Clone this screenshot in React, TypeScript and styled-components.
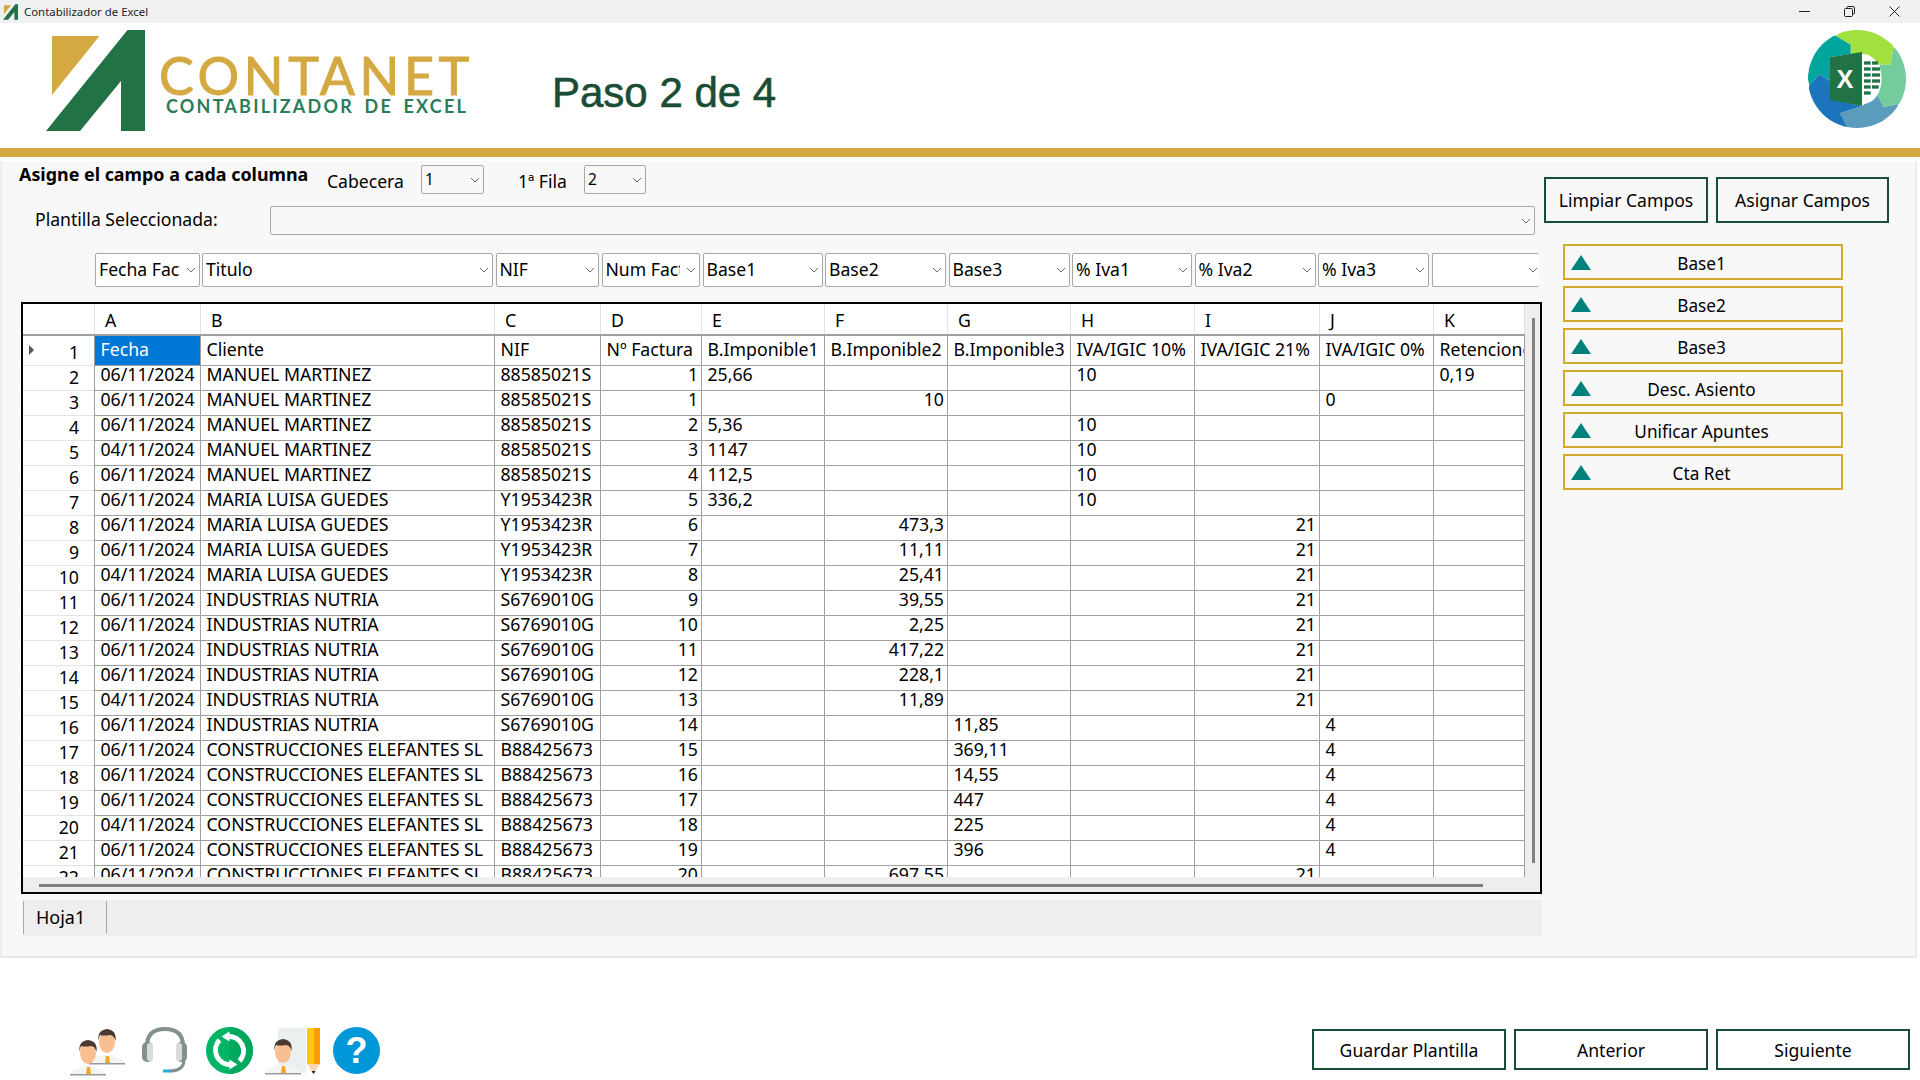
import React from 'react';
import styled, { createGlobalStyle } from 'styled-components';

const GlobalStyle = createGlobalStyle`
  html, body {
    margin: 0;
    padding: 0;
    width: 1920px;
    height: 1080px;
    overflow: hidden;
    background: #ffffff;
    font-family: "Noto Sans", "Liberation Sans", sans-serif;
    color: #000000;
  }
  * { box-sizing: border-box; }
`;

const COLUMN_WIDTHS = [72, 106, 294, 106, 101, 123, 123, 123, 124, 125, 114, 91];
const gridTemplate = COLUMN_WIDTHS.map((w) => `${w}px`).join(' ');

const TitleBar = styled.div`
  height: 23px;
  background: #f0f1f3;
  display: flex;
  align-items: center;
  padding: 0 20px 0 3px;
`;
const TitleText = styled.span`
  margin-left: 6px;
  font-size: 11.4px;
  color: #222222;
  flex: 1;
`;
const WindowControls = styled.div`
  display: flex;
  align-items: center;
  gap: 34px;
`;

const Header = styled.header`
  height: 125px;
  display: flex;
  align-items: flex-start;
  padding: 7px 14px 0 46px;
`;
const BrandText = styled.div`
  margin: 27px 0 0 14px;
  width: 320px;
`;
const BrandName = styled.div`
  font-family: "Lato", sans-serif;
  font-size: 52px;
  line-height: 37px;
  letter-spacing: 4.6px;
  -webkit-text-stroke: 1px #d4a942;
  color: #d4a942;
  white-space: nowrap;
`;
const BrandSub = styled.div`
  font-family: "Lato", sans-serif;
  font-size: 18px;
  line-height: 14px;
  margin: 5px 0 0 7px;
  letter-spacing: 2.2px;
  word-spacing: 4px;
  font-weight: 700;
  color: #2b7d58;
  white-space: nowrap;
`;
const StepTitle = styled.h1`
  margin: 39px 0 0 73px;
  font-family: "Liberation Sans", sans-serif;
  font-weight: 400;
  font-size: 42px;
  line-height: 47px;
  color: #1a4d36;
  -webkit-text-stroke: 0.6px #1a4d36;
  flex: 1;
`;
const GoldBar = styled.div`
  height: 9px;
  background: #d4a942;
  margin-bottom: 4px;
`;

const Panel = styled.main`
  width: 1917px;
  height: 797px;
  background: #f8f8f8;
  border-left: 2px solid #ededed;
  border-right: 2px solid #ededed;
  border-bottom: 2px solid #e8e8e8;
  display: flex;
  align-items: flex-start;
`;
const MainColumn = styled.div`
  width: 1540px;
  flex: none;
`;
const SideColumn = styled.div`
  padding: 16px 0 0 2px;
`;

const TopRow = styled.div`
  display: flex;
  align-items: flex-start;
  height: 45px;
  padding-left: 17px;
`;
const Heading = styled.div`
  font-weight: 700;
  font-size: 17.9px;
  line-height: 24px;
  margin-top: 1px;
  width: 308px;
  white-space: nowrap;
`;
const FieldLabel = styled.span`
  font-size: 17.6px;
  line-height: 24px;
  margin-top: 8px;
  white-space: nowrap;
`;
const SelectBox = styled.div<{ $w: number; $h?: number; $open?: boolean }>`
  width: ${(p) => p.$w}px;
  height: ${(p) => p.$h ?? 34}px;
  flex: none;
  background: ${(p) => (p.$h ? '#f8f8f8' : '#ffffff')};
  border: 1px solid #a8a8a8;
  border-right-width: ${(p) => (p.$open ? 0 : 1)}px;
  border-radius: 2px;
  display: flex;
  align-items: center;
  padding: 0 ${(p) => (p.$open ? 0 : 2)}px 2px 3px;
  font-size: ${(p) => (p.$h ? 15.5 : 17.6)}px;
  overflow: hidden;
`;
const SelectText = styled.span`
  flex: 1;
  min-width: 0;
  margin-right: 6px;
  overflow: hidden;
  white-space: nowrap;
`;
const ChevronIcon = styled.svg`
  flex: none;
  margin: 2px 1px 0 0;
`;
const SmallSelectWrap = styled.div<{ $ml: number; $mr?: number }>`
  margin: 4px ${(p) => p.$mr ?? 0}px 0 ${(p) => p.$ml}px;
`;
const TemplateRow = styled.div`
  display: flex;
  align-items: flex-start;
  height: 29px;
  padding-left: 33px;
  gap: 48px;
`;
const TemplateLabel = styled.span`
  font-size: 17.6px;
  line-height: 27px;
  white-space: nowrap;
  width: 187px;
`;
const FieldsRow = styled.div`
  display: flex;
  gap: 2.5px;
  margin-top: 18px;
  margin-left: 93px;
`;

const TableFrame = styled.div`
  margin: 15px 0 0 19px;
  width: 1521px;
  height: 592px;
  border: 2px solid #000000;
  background: #eeeeee;
  display: grid;
  grid-template-columns: 1fr 15px;
  grid-template-rows: 1fr 15px;
  overflow: hidden;
`;
const TableViewport = styled.div`
  background: #ffffff;
  overflow: hidden;
  font-size: 17.7px;
  line-height: 25px;
`;
const HeaderRow = styled.div`
  display: grid;
  grid-template-columns: ${gridTemplate};
  height: 32px;
  border-bottom: 2px solid #a0a0a0;
`;
const HeaderCell = styled.div`
  padding: 4px 0 0 10px;
  border-right: 1px solid #e2e2e2;
  white-space: nowrap;
`;
const DataRow = styled.div`
  display: grid;
  grid-template-columns: ${gridTemplate};
  height: 25px;
`;
const RowHeader = styled.div`
  display: flex;
  align-items: center;
  border-bottom: 1px solid #e4e4e4;
  border-right: 1px solid #a0a0a0;
  padding: 0 15px 0 6px;
`;
const RowArrow = styled.span<{ $show: boolean }>`
  width: 0;
  height: 0;
  border-top: 5px solid transparent;
  border-bottom: 5px solid transparent;
  border-left: ${(p) => (p.$show ? '5px solid #555555' : '0')};
  margin-top: -2px;
`;
const RowNumber = styled.span`
  margin-left: auto;
  padding-top: 4px;
`;
const Cell = styled.div<{ $right?: boolean; $selected?: boolean }>`
  padding: 0.5px 3px 0 5.5px;
  text-align: ${(p) => (p.$right ? 'right' : 'left')};
  border-bottom: 1px solid #a0a0a0;
  border-right: 1px solid #a0a0a0;
  background: ${(p) => (p.$selected ? '#0078d7' : 'transparent')};
  color: ${(p) => (p.$selected ? '#ffffff' : '#000000')};
  white-space: nowrap;
  overflow: hidden;
`;
const VScroll = styled.div`
  padding: 14px 0 14px 7px;
`;
const VThumb = styled.div`
  width: 3px;
  height: 100%;
  background: #808080;
`;
const HScroll = styled.div`
  padding: 7px 42px 0 16px;
`;
const HThumb = styled.div`
  height: 3px;
  background: #808080;
`;

const SheetBar = styled.div`
  margin: 6px 0 0 21px;
  width: 1519px;
  height: 36px;
  background: #eeeeee;
  display: flex;
`;
const SheetTab = styled.div`
  width: 84px;
  height: 33px;
  margin-top: 1px;
  border-left: 1px solid #a8a8a8;
  border-right: 1px solid #a8a8a8;
  padding-left: 12px;
  font-size: 18px;
  line-height: 33px;
`;

const ActionRow = styled.div`
  display: flex;
  gap: 8px;
`;
const ActionButton = styled.button<{ $w: number; $h: number }>`
  width: ${(p) => p.$w}px;
  height: ${(p) => p.$h}px;
  border: 2px solid #1a4d36;
  background: transparent;
  font-family: inherit;
  font-size: 17.6px;
  color: #000000;
  padding: 0;
`;
const SideList = styled.div`
  margin: 21px 0 0 19px;
  display: flex;
  flex-direction: column;
  gap: 6px;
`;
const SideButton = styled.button`
  width: 280px;
  height: 36px;
  border: 2px solid #d4a92c;
  background: transparent;
  font-family: inherit;
  font-size: 17.2px;
  color: #000000;
  display: flex;
  align-items: center;
  padding: 0 0 0 6px;
`;
const Triangle = styled.span`
  width: 0;
  height: 0;
  border-left: 10px solid transparent;
  border-right: 10px solid transparent;
  border-bottom: 15px solid #00817b;
  flex: none;
`;
const SideLabel = styled.span`
  flex: 1;
  text-align: center;
  padding: 2px 29px 0 0;
`;

const Footer = styled.footer`
  height: 122px;
  display: flex;
  align-items: flex-start;
  padding: 69px 10px 0 70px;
`;
const FooterIcons = styled.div`
  display: flex;
  align-items: flex-start;
  flex: 1;
`;
const IconSlot = styled.div<{ $ml?: number }>`
  margin-left: ${(p) => p.$ml ?? 0}px;
`;
const FooterButtons = styled.div`
  display: flex;
  gap: 8px;
  margin-top: 2px;
`;

const Chevron = () => (
  <ChevronIcon width="10" height="6" viewBox="0 0 10 6">
    <path d="M1 1l4 4 4-4" fill="none" stroke="#6a6a6a" strokeWidth="1" />
  </ChevronIcon>
);

const Select = ({ text, w, h, open }: { text?: string; w: number; h?: number; open?: boolean }) => (
  <SelectBox $w={w} $h={h} $open={open}>
    <SelectText>{text}</SelectText>
    <Chevron />
  </SelectBox>
);

const LogoMark = () => (
  <svg width="99" height="101" viewBox="0 0 99 101">
    <polygon points="6,6 53.5,6 6,65" fill="#d4a942" />
    <polygon points="81.5,0 99,0 99,101 75,101 75,51 34,101 0,101" fill="#217346" />
  </svg>
);

const SmallLogo = () => (
  <svg width="15" height="16" viewBox="0 0 99 101">
    <polygon points="6,6 53.5,6 6,65" fill="#d4a942" />
    <polygon points="81.5,0 99,0 99,101 75,101 75,51 34,101 0,101" fill="#217346" />
  </svg>
);

const ExcelBadge = () => (
  <svg width="98" height="98" viewBox="24 18 294 294">
    <defs>
      <clipPath id="badge">
        <circle cx="171" cy="165" r="147" />
      </clipPath>
    </defs>
    <g clipPath="url(#badge)">
      <polygon points="107,35 150,5 300,40 280,70 272,122 238,122 185,95 152,90 152,62" fill="#a2e03f" />
      <polygon points="280,70 330,100 330,230 295,240 250,250 232,210 240,122 272,122" fill="#74cc9c" />
      <polygon points="120,268 186,246 232,210 250,250 295,240 280,330 140,330" fill="#5b9bbc" />
      <polygon points="28,185 58,150 90,170 90,225 186,246 120,268 140,310 100,330 10,250" fill="#1c75bc" />
      <polygon points="107,35 152,62 152,90 90,100 90,170 58,150 28,185 10,100 60,20" fill="#00a69c" />
      <ellipse cx="190" cy="165" rx="55" ry="75" fill="#ffffff" />
      <polygon points="90,100 186,84 186,246 90,228" fill="#217346" />
      <g fill="#217346">
        <rect x="192" y="112" width="20" height="10" />
        <rect x="216" y="112" width="18" height="10" />
        <rect x="192" y="130" width="20" height="10" />
        <rect x="216" y="130" width="24" height="10" />
        <rect x="192" y="148" width="20" height="10" />
        <rect x="216" y="148" width="24" height="10" />
        <rect x="192" y="166" width="20" height="10" />
        <rect x="216" y="166" width="24" height="10" />
        <rect x="192" y="184" width="20" height="10" />
        <rect x="216" y="184" width="20" height="10" />
        <rect x="192" y="202" width="20" height="10" />
      </g>
      <text x="135" y="192" textAnchor="middle" fill="#ffffff" fontFamily="Liberation Sans" fontWeight="700" fontSize="76">X</text>
    </g>
  </svg>
);

const Person = ({ x, y, s = 1 }: { x: number; y: number; s?: number }) => (
  <g transform={`translate(${x} ${y}) scale(${s})`}>
    <path d="M0 36 Q2 31 12 29 L18 27 L24 29 Q34 31 36 36 Z" fill="#f4f4f4" />
    <rect x="0" y="36" width="36" height="1.5" fill="#9a9a9a" />
    <path d="M17 29 h3 l1 7 h-5 z" fill="#f2a91f" />
    <ellipse cx="18" cy="15" rx="8" ry="11" fill="#f9bf91" />
    <path d="M9.5 14 Q8 3 18 2 Q28 3 26.5 14 Q25 8 21 8 Q14 9 11 8 Q10 10 9.5 14 Z" fill="#4a3b32" />
  </g>
);

const UsersIcon = () => (
  <svg width="56" height="50" viewBox="0 0 56 50">
    <Person x={19} y={0} />
    <Person x={0} y={11} />
  </svg>
);

const HeadsetIcon = () => (
  <svg width="46" height="50" viewBox="0 0 46 50">
    <path d="M5 22 V19 Q5 2 23 2 Q41 2 41 19 V22" fill="none" stroke="#84908f" strokeWidth="4" />
    <rect x="0" y="15" width="11" height="20" rx="5" fill="#84908f" />
    <rect x="5" y="16" width="6" height="18" rx="3" fill="#d9dcdb" />
    <rect x="34" y="15" width="11" height="20" rx="5" fill="#84908f" />
    <rect x="34" y="16" width="6" height="18" rx="3" fill="#d9dcdb" />
    <path d="M42 34 Q41 44 27 44" fill="none" stroke="#84908f" strokeWidth="3" />
    <rect x="21" y="42.5" width="7" height="3" fill="#29a9e0" />
  </svg>
);

const SyncIcon = () => (
  <svg width="47" height="47" viewBox="0 0 47 47">
    <circle cx="23.5" cy="23.5" r="23.5" fill="#00b566" />
    <path d="M23.5 0 A23.5 23.5 0 0 1 23.5 47 Z" fill="#00a85c" />
    <path d="M22 9.5 A14.5 14.5 0 0 1 33.5 34" fill="none" stroke="#ffffff" strokeWidth="5" />
    <polygon points="23.5,4.5 23.5,14.5 15.5,9.5" fill="#ffffff" />
    <path d="M25 37.5 A14.5 14.5 0 0 1 13.5 13" fill="none" stroke="#ffffff" strokeWidth="5" />
    <polygon points="23.5,32.5 23.5,42.5 31.5,37.5" fill="#ffffff" />
  </svg>
);

const EditUserIcon = () => (
  <svg width="56" height="50" viewBox="0 0 56 50">
    <path d="M13 1 H41 V46 H13 Z" fill="#eaeff0" />
    <rect x="42" y="1" width="6.5" height="36" fill="#ffc60b" />
    <rect x="48.5" y="1" width="6.5" height="36" fill="#ff9b00" />
    <polygon points="42,37 55,37 48.5,47" fill="#f9d5ae" />
    <polygon points="46.5,44 50.5,44 48.5,47" fill="#222222" />
    <Person x={0} y={10} />
  </svg>
);

const HelpIcon = () => (
  <svg width="47" height="47" viewBox="0 0 47 47">
    <circle cx="23.5" cy="23.5" r="23.5" fill="#0098d8" />
    <text x="23.5" y="36" textAnchor="middle" fill="#ffffff" fontFamily="Liberation Sans" fontWeight="700" fontSize="36">?</text>
  </svg>
);

const LETTERS = ['A', 'B', 'C', 'D', 'E', 'F', 'G', 'H', 'I', 'J', 'K'];
const RIGHT_COLS = new Set([3, 5, 8]);

const MM = ['MANUEL MARTINEZ', '88585021S'];
const ML = ['MARIA LUISA GUEDES', 'Y1953423R'];
const IN = ['INDUSTRIAS NUTRIA', 'S6769010G'];
const CE = ['CONSTRUCCIONES ELEFANTES SL', 'B88425673'];

const ROWS: string[][] = [
  ['Fecha', 'Cliente', 'NIF', 'Nº Factura', 'B.Imponible1', 'B.Imponible2', 'B.Imponible3', 'IVA/IGIC 10%', 'IVA/IGIC 21%', 'IVA/IGIC 0%', 'Retenciones'],
  ['06/11/2024', ...MM, '1', '25,66', '', '', '10', '', '', '0,19'],
  ['06/11/2024', ...MM, '1', '', '10', '', '', '', '0', ''],
  ['06/11/2024', ...MM, '2', '5,36', '', '', '10', '', '', ''],
  ['04/11/2024', ...MM, '3', '1147', '', '', '10', '', '', ''],
  ['06/11/2024', ...MM, '4', '112,5', '', '', '10', '', '', ''],
  ['06/11/2024', ...ML, '5', '336,2', '', '', '10', '', '', ''],
  ['06/11/2024', ...ML, '6', '', '473,3', '', '', '21', '', ''],
  ['06/11/2024', ...ML, '7', '', '11,11', '', '', '21', '', ''],
  ['04/11/2024', ...ML, '8', '', '25,41', '', '', '21', '', ''],
  ['06/11/2024', ...IN, '9', '', '39,55', '', '', '21', '', ''],
  ['06/11/2024', ...IN, '10', '', '2,25', '', '', '21', '', ''],
  ['06/11/2024', ...IN, '11', '', '417,22', '', '', '21', '', ''],
  ['06/11/2024', ...IN, '12', '', '228,1', '', '', '21', '', ''],
  ['04/11/2024', ...IN, '13', '', '11,89', '', '', '21', '', ''],
  ['06/11/2024', ...IN, '14', '', '', '11,85', '', '', '4', ''],
  ['06/11/2024', ...CE, '15', '', '', '369,11', '', '', '4', ''],
  ['06/11/2024', ...CE, '16', '', '', '14,55', '', '', '4', ''],
  ['06/11/2024', ...CE, '17', '', '', '447', '', '', '4', ''],
  ['04/11/2024', ...CE, '18', '', '', '225', '', '', '4', ''],
  ['06/11/2024', ...CE, '19', '', '', '396', '', '', '4', ''],
  ['06/11/2024', ...CE, '20', '', '697,55', '', '', '21', '', ''],
];

const FIELD_SELECTS: [string, number][] = [
  ['Fecha Fact', 104.5], ['Titulo', 291], ['NIF', 103.5], ['Num Fact', 98.5], ['Base1', 120], ['Base2', 121],
  ['Base3', 121], ['% Iva1', 120], ['% Iva2', 121], ['% Iva3', 111],
];

const SIDE_BUTTONS = ['Base1', 'Base2', 'Base3', 'Desc. Asiento', 'Unificar Apuntes', 'Cta Ret'];

const App = () => (
  <>
    <GlobalStyle />
    <TitleBar>
      <SmallLogo />
      <TitleText>Contabilizador de Excel</TitleText>
      <WindowControls>
        <svg width="11" height="2" viewBox="0 0 11 2"><rect width="11" height="1" fill="#222" /></svg>
        <svg width="11" height="11" viewBox="0 0 11 11" fill="none" stroke="#222"><rect x="0.5" y="2.5" width="8" height="8" rx="1" /><path d="M3 2V1.5a1 1 0 0 1 1-1h5a1.5 1.5 0 0 1 1.5 1.5v5a1 1 0 0 1-1 1H9" /></svg>
        <svg width="11" height="11" viewBox="0 0 11 11" stroke="#222"><path d="M0.5 0.5l10 10M10.5 0.5l-10 10" /></svg>
      </WindowControls>
    </TitleBar>
    <Header>
      <LogoMark />
      <BrandText>
        <BrandName>CONTANET</BrandName>
        <BrandSub>CONTABILIZADOR DE EXCEL</BrandSub>
      </BrandText>
      <StepTitle>Paso 2 de 4</StepTitle>
      <ExcelBadge />
    </Header>
    <GoldBar />
    <Panel>
      <MainColumn>
        <TopRow>
          <Heading>Asigne el campo a cada columna</Heading>
          <FieldLabel>Cabecera</FieldLabel>
          <SmallSelectWrap $ml={17} $mr={34}><Select text="1" w={63} h={29} /></SmallSelectWrap>
          <FieldLabel>1ª Fila</FieldLabel>
          <SmallSelectWrap $ml={17}><Select text="2" w={62} h={29} /></SmallSelectWrap>
        </TopRow>
        <TemplateRow>
          <TemplateLabel>Plantilla Seleccionada:</TemplateLabel>
          <Select w={1265} h={29} />
        </TemplateRow>
        <FieldsRow>
          {FIELD_SELECTS.map(([text, w]) => (
            <Select key={text} text={text} w={w} />
          ))}
          <Select w={107} open />
        </FieldsRow>
        <TableFrame>
          <TableViewport>
            <HeaderRow>
              <HeaderCell />
              {LETTERS.map((l) => (
                <HeaderCell key={l}>{l}</HeaderCell>
              ))}
            </HeaderRow>
            {ROWS.map((row, i) => (
              <DataRow key={i}>
                <RowHeader>
                  <RowArrow $show={i === 0} />
                  <RowNumber>{i + 1}</RowNumber>
                </RowHeader>
                {row.map((value, c) => (
                  <Cell key={c} $right={i > 0 && RIGHT_COLS.has(c)} $selected={i === 0 && c === 0}>
                    {value}
                  </Cell>
                ))}
              </DataRow>
            ))}
          </TableViewport>
          <VScroll><VThumb /></VScroll>
          <HScroll><HThumb /></HScroll>
          <div />
        </TableFrame>
        <SheetBar>
          <SheetTab>Hoja1</SheetTab>
        </SheetBar>
      </MainColumn>
      <SideColumn>
        <ActionRow>
          <ActionButton $w={164} $h={46}>Limpiar Campos</ActionButton>
          <ActionButton $w={173} $h={46}>Asignar Campos</ActionButton>
        </ActionRow>
        <SideList>
          {SIDE_BUTTONS.map((label) => (
            <SideButton key={label}>
              <Triangle />
              <SideLabel>{label}</SideLabel>
            </SideButton>
          ))}
        </SideList>
      </SideColumn>
    </Panel>
    <Footer>
      <FooterIcons>
        <IconSlot><UsersIcon /></IconSlot>
        <IconSlot $ml={16}><HeadsetIcon /></IconSlot>
        <IconSlot $ml={18}><SyncIcon /></IconSlot>
        <IconSlot $ml={12}><EditUserIcon /></IconSlot>
        <IconSlot $ml={12}><HelpIcon /></IconSlot>
      </FooterIcons>
      <FooterButtons>
        <ActionButton $w={194} $h={41}>Guardar Plantilla</ActionButton>
        <ActionButton $w={194} $h={41}>Anterior</ActionButton>
        <ActionButton $w={194} $h={41}>Siguiente</ActionButton>
      </FooterButtons>
    </Footer>
  </>
);

export default App;
